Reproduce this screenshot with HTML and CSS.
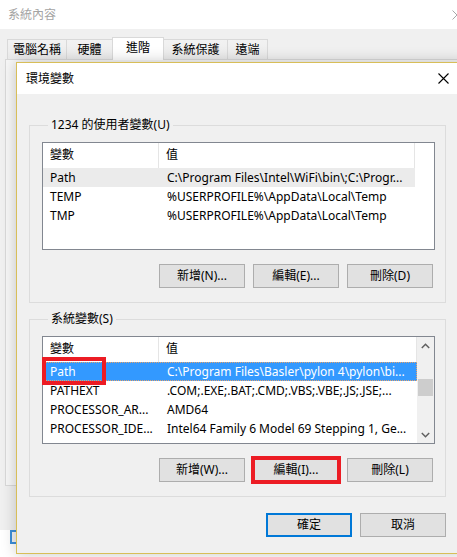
FILE: index.html
```html
<!DOCTYPE html>
<html lang="zh-Hant">
<head>
<meta charset="utf-8">
<title>環境變數</title>
<link rel="stylesheet" href="styles.css">
</head>
<body>
<div class="bgwin">
  <div class="bg-titlebar">
    <span class="bg-title">系統內容</span>
    <svg class="bg-close" width="10" height="10" viewBox="0 0 10 10"><path d="M0.5 0.5L9.5 9.5M9.5 0.5L0.5 9.5" stroke="#a8a8a8" stroke-width="1" fill="none"/></svg>
  </div>
  <div class="bg-body">
    <div class="tabs">
      <div class="tab t1">電腦名稱</div>
      <div class="tab t2">硬體</div>
      <div class="tab t3 active">進階</div>
      <div class="tab t4">系統保護</div>
      <div class="tab t5">遠端</div>
    </div>
    <div class="tabpanel"></div>
  </div>
  <div class="bg-footer"><div class="bg-button"></div></div>
</div>

<div class="dialog">
  <div class="dlg-titlebar">
    <span class="dlg-title">環境變數</span>
    <span class="dlg-close"><svg width="11" height="11" viewBox="0 0 11 11"><path d="M0.5 0.5L10.5 10.5M10.5 0.5L0.5 10.5" stroke="#000" stroke-width="1.1" fill="none"/></svg></span>
  </div>
  <div class="dlg-body">
    <fieldset class="group">
      <legend>1234 的使用者變數(U)</legend>
      <div class="listview">
        <div class="lv-main fixed">
          <div class="lv-header"><div class="c1">變數</div><div class="c2">值</div></div>
          <div class="lv-row sel-inactive"><div class="c1">Path</div><div class="c2">C:\Program Files\Intel\WiFi\bin\;C:\Progr...</div></div>
          <div class="lv-row"><div class="c1">TEMP</div><div class="c2">%USERPROFILE%\AppData\Local\Temp</div></div>
          <div class="lv-row"><div class="c1">TMP</div><div class="c2">%USERPROFILE%\AppData\Local\Temp</div></div>
        </div>
      </div>
      <div class="btn-row">
        <button class="btn">新增(N)...</button>
        <button class="btn">編輯(E)...</button>
        <button class="btn">刪除(D)</button>
      </div>
    </fieldset>

    <fieldset class="group group2">
      <legend>系統變數(S)</legend>
      <div class="listview">
        <div class="lv-main">
          <div class="lv-header"><div class="c1">變數</div><div class="c2">值</div></div>
          <div class="lv-row sel-active"><div class="c1">Path</div><div class="c2">C:\Program Files\Basler\pylon 4\pylon\bi...</div><span class="annot"></span></div>
          <div class="lv-row"><div class="c1">PATHEXT</div><div class="c2">.COM;.EXE;.BAT;.CMD;.VBS;.VBE;.JS;.JSE;...</div></div>
          <div class="lv-row"><div class="c1">PROCESSOR_AR...</div><div class="c2">AMD64</div></div>
          <div class="lv-row"><div class="c1">PROCESSOR_IDE...</div><div class="c2">Intel64 Family 6 Model 69 Stepping 1, Ge...</div></div>
        </div>
        <div class="scrollbar">
          <div class="sb-btn"><svg width="9" height="6" viewBox="0 0 9 6"><path d="M0.8 5L4.5 1.3L8.2 5" stroke="#606060" stroke-width="1.5" fill="none"/></svg></div>
          <div class="sb-track"><div class="sb-thumb"></div></div>
          <div class="sb-btn"><svg width="9" height="6" viewBox="0 0 9 6"><path d="M0.8 1L4.5 4.7L8.2 1" stroke="#606060" stroke-width="1.5" fill="none"/></svg></div>
        </div>
      </div>
      <div class="btn-row">
        <button class="btn">新增(W)...</button>
        <button class="btn marked">編輯(I)...</button>
        <button class="btn">刪除(L)</button>
      </div>
    </fieldset>

    <div class="dlg-buttons">
      <button class="btn default">確定</button>
      <button class="btn">取消</button>
    </div>
  </div>
</div>
</body>
</html>
```

FILE: styles.css
```css
* { box-sizing: border-box; }
html, body { margin: 0; padding: 0; }
body {
  width: 457px;
  height: 557px;
  overflow: hidden;
  position: relative;
  background: #ffffff;
  color: #000;
  font-family: "Noto Sans", "Noto Sans CJK TC", sans-serif;
  font-size: 12px;
  line-height: 16px;
}

/* background window */
.bgwin { width: 457px; height: 557px; display: flex; flex-direction: column; }
.bg-titlebar {
  height: 29px;
  flex: none;
  background: #fff;
  display: flex;
  align-items: center;
  justify-content: space-between;
  padding-left: 8px;
  color: #a4a4a4;
}
.bg-close { margin-right: -5px; }
.bg-body {
  height: 501px;
  flex: none;
  background: #f0f0f0;
  padding-top: 8px;
  padding-left: 5px;
}
.tabs {
  display: flex;
  align-items: flex-end;
  height: 22px;
  margin-left: 2px;
}
.tab {
  height: 20px;
  border: 1px solid #d9d9d9;
  border-bottom: none;
  background: linear-gradient(#f2f2f2, #ebebeb);
  text-align: center;
  line-height: 19px;
  color: #000;
  position: relative;
}
.tab + .tab { margin-left: -1px; }
.t1 { width: 60px; }
.t2 { width: 47px; }
.t3 { width: 52px; }
.t4 { width: 65px; }
.t5 { width: 41px; }
.tab.active {
  height: 23px;
  margin-bottom: -1px;
  background: #ffffff;
  line-height: 20px;
  z-index: 1;
}
.tabpanel {
  height: 427px;
  width: 460px;
  border: 1px solid #d9d9d9;
  background: #f7f7f7;
}
.bg-footer { flex: 1; background: #fff; padding-left: 10px; }
.bg-button {
  width: 60px;
  height: 14px;
  border: 2px solid #3d8fd9;
  border-right: none;
  background: #f2f2f2;
}

/* dialog window */
.dialog {
  position: absolute;
  left: 16px;
  top: 62px;
  width: 451px;
  height: 492px;
  border: 1px solid #d8be58;
  background: #f0f0f0;
  box-shadow: 0 0 14px rgba(0, 0, 0, 0.22);
  display: flex;
  flex-direction: column;
  z-index: 5;
}
.dlg-titlebar {
  height: 31px;
  flex: none;
  background: #fff;
  display: flex;
  align-items: center;
  justify-content: space-between;
  padding-left: 9px;
}
.dlg-close {
  width: 46px;
  height: 31px;
  display: flex;
  align-items: center;
  justify-content: center;
}
.dlg-body {
  flex: 1;
  padding-left: 12px;
}

.group {
  width: 417px;
  margin: 23px 0 0 0;
  padding: 9px 11px 14px 12px;
  border: 1px solid #dcdcdc;
  min-width: 0;
}
.group2 { margin-top: 8px; }
.group legend {
  padding: 0 3px;
  margin-left: 6px;
  line-height: 16px;
}

.listview {
  width: 393px;
  height: 108px;
  border: 1px solid #828790;
  background: #fff;
  display: flex;
}
.lv-main { flex: 1; min-width: 0; }
.lv-main.fixed { flex: none; width: 372px; }
.lv-header {
  height: 25px;
  display: flex;
  border-right: 1px solid #e5e5e5;
  line-height: 24px;
}
.lv-header .c1 { border-right: 1px solid #e5e5e5; }
.c1 {
  width: 116px;
  flex: none;
  padding-left: 7px;
  white-space: nowrap;
  overflow: hidden;
}
.c2 {
  flex: 1;
  padding-left: 7px;
  white-space: nowrap;
  overflow: hidden;
}
.lv-header .c2 { padding-left: 7px; }
.lv-row {
  height: 19px;
  line-height: 19px;
  display: flex;
  position: relative;
}
.lv-row .c2 { padding-left: 8px; }
.sel-inactive { background: #ebebeb; }
.sel-active {
  background: #3399ff;
  color: #fff;
  outline: 1px dotted #e7a36b;
  outline-offset: -1px;
}
.annot {
  position: absolute;
  left: -1px;
  top: -5px;
  width: 64px;
  height: 28px;
  border: 4px solid #ec1c24;
}

.scrollbar {
  width: 17px;
  flex: none;
  background: #f0f0f0;
  display: flex;
  flex-direction: column;
}
.sb-btn {
  height: 17px;
  flex: none;
  display: flex;
  align-items: center;
  justify-content: center;
}
.sb-track { flex: 1; padding-top: 25px; }
.sb-thumb {
  height: 17px;
  margin: 0 1px;
  background: #cdcdcd;
}

.btn-row {
  display: flex;
  justify-content: flex-end;
  gap: 8px;
  margin-top: 14px;
  padding-right: 1px;
}
.btn {
  width: 86px;
  height: 24px;
  border: 1px solid #adadad;
  background: #e1e1e1;
  font-family: inherit;
  font-size: 12px;
  line-height: 16px;
  color: #000;
  padding: 0;
  margin: 0;
}
.btn.marked {
  outline: 4px solid #ec1c24;
  outline-offset: -2px;
}
.btn.default { border: 2px solid #0078d7; }

.dlg-buttons {
  width: 417px;
  display: flex;
  justify-content: flex-end;
  gap: 8px;
  margin-top: 16px;
}
```
